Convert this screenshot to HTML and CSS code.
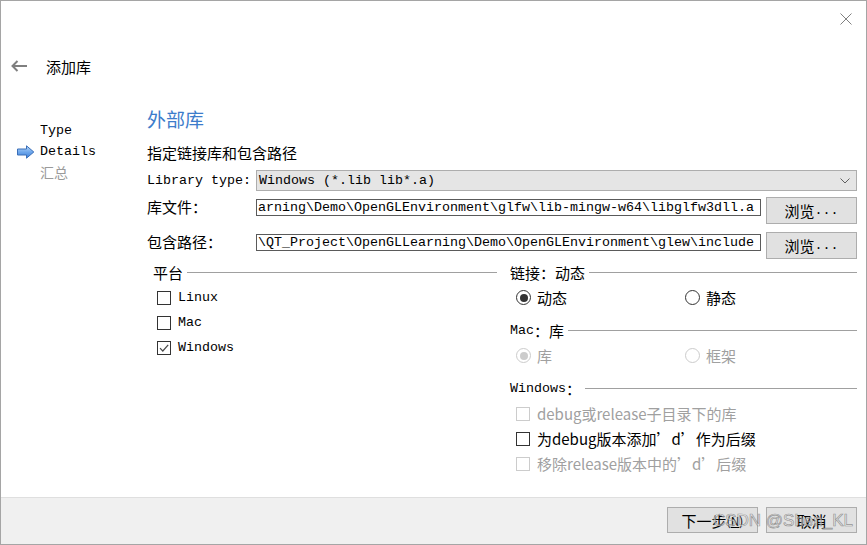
FILE: index.html
```html
<!DOCTYPE html>
<html lang="zh-CN">
<head>
<meta charset="utf-8">
<title>添加库</title>
<link rel="stylesheet" href="styles.css">
</head>
<body>
<div class="window">
  <div class="topbar">
    <svg class="close" width="12" height="12" viewBox="0 0 12 12"><path d="M0.5 0.5 L11.5 11.5 M11.5 0.5 L0.5 11.5" stroke="#808080" stroke-width="1" fill="none"/></svg>
  </div>
  <div class="titlebar">
    <svg class="back" width="16" height="12" viewBox="0 0 16 12"><path d="M1.5 6 H16 M6.5 1 L1.5 6 L6.5 11" stroke="#7f7f7f" stroke-width="2" fill="none"/></svg>
    <span class="title">添加库</span>
  </div>
  <div class="main">
    <nav class="steps">
      <div class="step"><span class="marker"></span><span>Type</span></div>
      <div class="step current">
        <span class="marker">
          <svg width="18" height="14" viewBox="0 0 18 14">
            <defs>
              <linearGradient id="ag" x1="0" y1="0" x2="0" y2="1">
                <stop offset="0" stop-color="#b9d8f8"/>
                <stop offset="0.5" stop-color="#6fa8ec"/>
                <stop offset="1" stop-color="#3d7fd8"/>
              </linearGradient>
            </defs>
            <path d="M0.5 4 H9.5 V0.8 L16.8 7 L9.5 13.2 V10 H0.5 Z" fill="url(#ag)" stroke="#3a6fb8" stroke-width="1"/>
          </svg>
        </span>
        <span>Details</span>
      </div>
      <div class="step pending"><span class="marker"></span><span class="cn">汇总</span></div>
    </nav>
    <section class="content">
      <h2 class="heading">外部库</h2>
      <p class="subtitle cn">指定链接库和包含路径</p>
      <div class="form">
        <div class="row row-type">
          <span class="label">Library type:</span>
          <div class="combo">
            <span class="combo-text">Windows (*.lib lib*.a)</span>
            <svg class="chev" width="10" height="6" viewBox="0 0 10 6"><path d="M0.5 0.5 L5 5 L9.5 0.5" stroke="#606060" stroke-width="1" fill="none"/></svg>
          </div>
        </div>
        <div class="row row-file">
          <span class="label cn">库文件：</span>
          <div class="input">arning\Demo\OpenGLEnvironment\glfw\lib-mingw-w64\libglfw3dll.a</div>
          <button class="btn"><span class="cn">浏览</span>...</button>
        </div>
        <div class="row row-file row-inc">
          <span class="label cn">包含路径：</span>
          <div class="input">\QT_Project\OpenGLLearning\Demo\OpenGLEnvironment\glew\include</div>
          <button class="btn"><span class="cn">浏览</span>...</button>
        </div>
      </div>
      <div class="groups">
        <div class="col">
          <div class="group-head"><span class="cn">平台</span><span class="rule"></span></div>
          <div class="opts opts-left">
            <div class="opt"><span class="box"></span><span>Linux</span></div>
            <div class="opt"><span class="box"></span><span>Mac</span></div>
            <div class="opt"><span class="box"><svg width="12" height="12" viewBox="0 0 12 12"><path d="M2 6.2 L4.8 9 L10.2 2.8" stroke="#4a4a4a" stroke-width="1.2" fill="none"/></svg></span><span>Windows</span></div>
          </div>
        </div>
        <div class="col">
          <div class="group-head"><span class="cn">链接：动态</span><span class="rule"></span></div>
          <div class="opts radios">
            <div class="opt"><span class="radio on"></span><span class="cn">动态</span></div>
            <div class="opt"><span class="radio"></span><span class="cn">静态</span></div>
          </div>
          <div class="group-head spaced"><span>Mac</span><span class="cn">：库</span><span class="rule"></span></div>
          <div class="opts radios disabled">
            <div class="opt"><span class="radio on"></span><span class="cn">库</span></div>
            <div class="opt"><span class="radio"></span><span class="cn">框架</span></div>
          </div>
          <div class="group-head spaced"><span>Windows</span><span class="cn">：</span><span class="rule"></span></div>
          <div class="opts">
            <div class="opt disabled"><span class="box"></span><span class="cn">debug或release子目录下的库</span></div>
            <div class="opt"><span class="box"></span><span class="cn">为debug版本添加’d’作为后缀</span></div>
            <div class="opt disabled"><span class="box"></span><span class="cn">移除release版本中的’d’后缀</span></div>
          </div>
        </div>
      </div>
    </section>
  </div>
  <div class="footer">
    <button class="fbtn"><span class="cn">下一步</span><span class="mn">(<u>N</u>)</span></button>
    <button class="fbtn"><span class="cn">取消</span></button>
    <span class="watermark">CSDN @Shen_KL</span>
  </div>
</div>
</body>
</html>
```
FILE: styles.css
```css
* { box-sizing: border-box; }
html, body { margin: 0; padding: 0; background: #fff; }
body {
  font-family: "Liberation Mono", "Noto Sans CJK SC", monospace;
  font-size: 13.33px;
  color: #000;
}
.window {
  width: 867px;
  height: 545px;
  border: 1px solid #a5a5a5;
  display: flex;
  flex-direction: column;
  background: #fff;
}
.cn { font-family: "Noto Sans CJK SC", sans-serif; font-size: 15px; }

.topbar {
  height: 36px;
  display: flex;
  justify-content: flex-end;
  padding: 12px 14px 0 0;
}
.close { display: block; }

.titlebar {
  height: 63px;
  display: flex;
  align-items: center;
  align-self: stretch;
  padding: 0 0 4px 10px;
}
.back { display: block; margin-right: 19px; margin-top: -2px; }
.title { font-family: "Noto Sans CJK SC", sans-serif; font-size: 15px; line-height: 22px; }

.main { flex: 1; display: flex; }
.steps { width: 146px; padding: 20px 0 0 16px; }
.step { display: flex; align-items: center; height: 21px; line-height: 21px; }
.marker { width: 23px; height: 21px; display: flex; align-items: center; }
.marker svg { display: block; }
.step.pending { color: #9a9a9a; }
.step .cn { font-size: 14px; }

.content { flex: 1; padding: 7px 9px 0 0; }
.heading {
  margin: 0;
  font-family: "Noto Sans CJK SC", sans-serif;
  font-size: 19px;
  font-weight: 400;
  line-height: 24px;
  color: #3d7ccb;
}
.subtitle { margin: 12px 0 0; line-height: 20px; }

.form { margin-top: 7px; }
.row { display: flex; align-items: flex-start; }
.label { width: 109px; flex: none; white-space: nowrap; }
.row-type { height: 21px; }
.row-type .label { line-height: 21px; }
.combo {
  flex: 1;
  height: 21px;
  background: #e5e5e5;
  border: 1px solid #adadad;
  display: flex;
  align-items: center;
  justify-content: space-between;
  padding: 0 6px 0 2px;
}
.combo-text { line-height: 19px; white-space: nowrap; }
.chev { display: block; margin-top: 1px; }

.row-file { height: 26px; margin-top: 6px; }
.row-inc { margin-top: 9px; }
.row-file .label { line-height: 16px; margin-top: 2px; }
.input {
  flex: 1;
  height: 17px;
  margin-top: 2px;
  border: 1px solid #5a5a5a;
  background: #fff;
  padding-left: 1px;
  line-height: 15px;
  white-space: nowrap;
  overflow: hidden;
}
.btn {
  width: 91px;
  height: 27px;
  margin-left: 5px;
  flex: none;
  background: #e1e1e1;
  border: 1px solid #adadad;
  font-family: "Liberation Mono", monospace;
  font-size: 13.33px;
  color: #000;
  padding: 0;
  display: flex;
  align-items: center;
  justify-content: center;
}

.groups {
  margin-top: 4px;
  display: grid;
  grid-template-columns: 350px 1fr;
  column-gap: 7px;
}
.col { padding-left: 6px; }
.group-head {
  height: 20px;
  display: flex;
  align-items: center;
  white-space: nowrap;
  margin-bottom: 3px;
}
.group-head.spaced { margin-top: 10px; }
.rule { flex: 1; height: 1px; background: #a0a0a0; margin-left: 4px; }

.opts { padding-left: 6px; }
.opts-left { padding-left: 4px; }
.opt { display: flex; align-items: center; height: 25px; white-space: nowrap; }
.radios { display: grid; grid-template-columns: 169px 1fr; }
.box {
  width: 14px;
  height: 14px;
  border: 1px solid #333;
  background: #fff;
  margin-right: 7px;
  flex: none;
  display: flex;
  align-items: center;
  justify-content: center;
}
.box svg { display: block; }
.radio {
  width: 15px;
  height: 15px;
  border: 1px solid #333;
  border-radius: 50%;
  margin-right: 6px;
  flex: none;
  display: flex;
  align-items: center;
  justify-content: center;
  background: #fff;
}
.radio.on::after {
  content: "";
  width: 8px;
  height: 8px;
  border-radius: 50%;
  background: #333;
}
.disabled { color: #a0a0a0; }
.disabled .radio, .disabled .box, .opt.disabled .box { border-color: #cccccc; }
.disabled .radio.on::after { background: #cccccc; }

.footer {
  height: 47px;
  border-top: 1px solid #dfdfdf;
  background: #f0f0f0;
  display: flex;
  justify-content: flex-end;
  align-items: flex-start;
  gap: 8px;
  padding: 9px 9px 0 0;
  position: relative;
}
.fbtn {
  width: 91px;
  height: 26px;
  background: #e1e1e1;
  border: 1px solid #adadad;
  padding: 0;
  color: #000;
  display: flex;
  align-items: center;
  justify-content: center;
}
.fbtn .cn { font-size: 15px; }
.mn { font-family: "Noto Sans CJK SC", sans-serif; font-size: 12px; }
.watermark {
  position: absolute;
  right: 13px;
  top: 13px;
  font-family: "Liberation Sans", Arial, sans-serif;
  font-size: 17px;
  line-height: 20px;
  color: rgba(255, 255, 255, 0.55);
  -webkit-text-stroke: 0.7px rgba(110, 110, 110, 0.7);
  pointer-events: none;
}
```
